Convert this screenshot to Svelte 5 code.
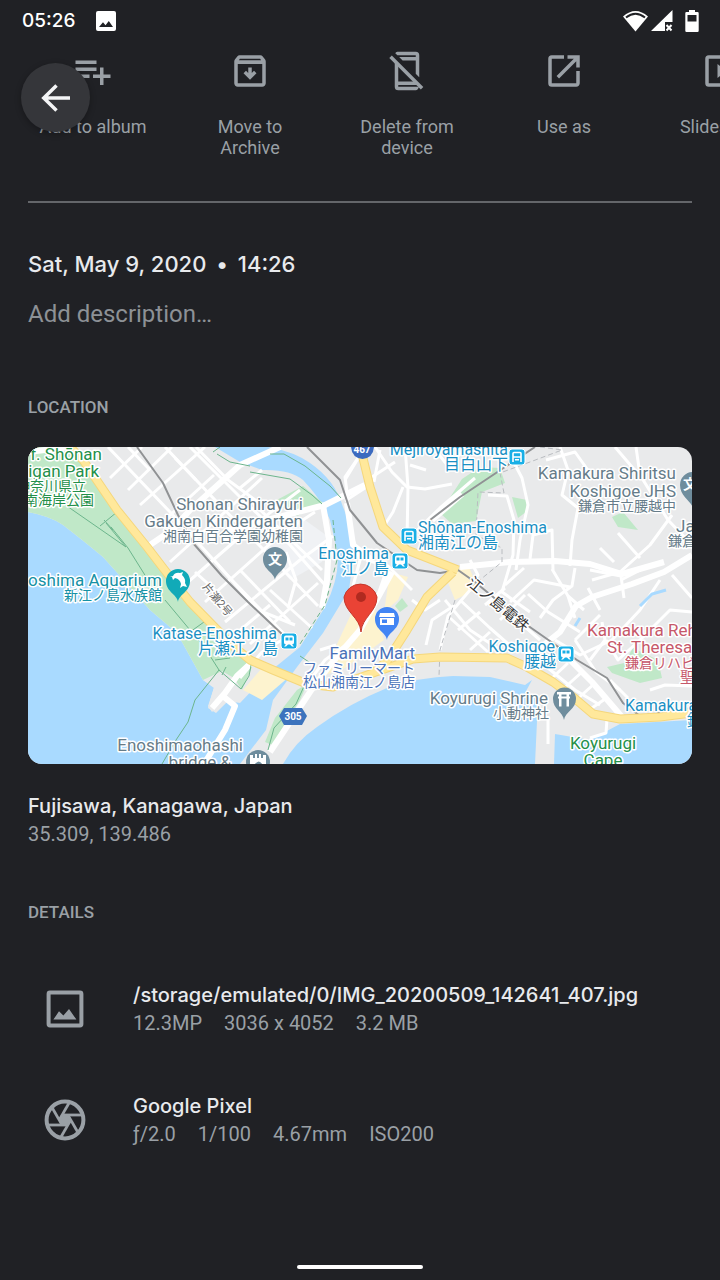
<script>
  const files = ['12.3MP', '3036 x 4052', '3.2 MB'];
  const camera = ['ƒ/2.0', '1/100', '4.67mm', 'ISO200'];

  // Narrow residential streets, drawn as thin white lines
  const lanes = [
    'M108 447 L170 512 L230 578 L290 640', 'M165 447 L215 500 L262 548 L318 606', 'M190 447 L240 497 L290 545 L325 585',
    'M128 490 L172 447', 'M110 478 L142 447', 'M140 505 L205 447', 'M156 528 L214 475', 'M170 562 L236 502 L262 478',
    'M188 582 L250 528 L300 490', 'M205 602 L280 535 L315 512', 'M225 622 L300 560 L333 536', 'M250 644 L318 583', 'M238 632 L270 605',
    'M150 470 L128 447', 'M196 480 L175 458', 'M214 560 L258 610 L295 625', 'M196 447 L228 480 L262 505', 'M250 500 L322 570',
    'M240 570 L290 622', 'M262 470 L240 488', 'M215 590 L195 572', 'M270 590 L312 628', 'M288 608 L296 580 L286 552',
    'M365 447 L345 480', 'M360 455 L345 477 L348 500', 'M375 447 L392 472 L407 487 L425 489 L452 484', 'M405 447 L408 487 L407 540',
    'M345 501 L368 486', 'M380 450 L374 482', 'M403 487 L393 512 L384 526', 'M407 540 L440 508 L475 478', 'M350 530 L360 560 L352 590',
    'M395 462 L372 477', 'M433 447 L448 466 L462 452', 'M410 465 L426 470', 'M366 560 L388 566 L412 590', 'M388 566 L372 612 L345 650',
    'M512 459 L522 478 L528 505 L520 540 L516 570', 'M488 495 L507 496 L514 520 L513 555 L502 592 L530 612', 'M530 559 L533 535 L552 530 L553 570',
    'M560 447 L568 470 L562 495 L578 508 L572 540 L570 566', 'M546 460 L575 452 L590 473', 'M615 447 L638 474', 'M636 447 L640 475 L668 520 L692 545',
    'M592 580 L620 572 L650 545 L672 515', 'M618 533 L640 558', 'M600 548 L614 562', 'M505 585 L524 568', 'M510 602 L534 580 L570 587',
    'M552 569 L568 596 L584 610', 'M540 618 L553 600 L572 586 L575 568', 'M528 594 L548 612 L580 632', 'M515 618 L540 640',
    'M485 605 L505 588', 'M500 620 L525 595', 'M460 600 L490 628 L515 650', 'M450 618 L488 652', 'M470 590 L448 616 L440 650',
    'M445 600 L470 630 L500 650', 'M458 630 L480 612', 'M470 650 L490 632', 'M426 645 L432 620 L455 605', 'M412 600 L425 610 L440 600',
    'M590 570 L621 576 L624 598', 'M621 580 L648 566', 'M600 610 L588 588', 'M575 618 L568 596', 'M555 640 L580 655 L612 640 L640 610 L660 580',
    'M606 640 L618 660 L640 640', 'M640 640 L670 610 L692 612', 'M672 575 L692 598', 'M575 640 L600 615', 'M590 660 L605 640 L602 622',
    'M650 690 L665 685 L692 686', 'M575 640 L596 672 L620 690', 'M540 670 L554 655', 'M550 680 L568 663', 'M562 690 L582 672',
    'M574 702 L594 684', 'M586 712 L608 697', 'M548 668 L575 690 L600 705', 'M607 719 L606 733 L590 738', 'M610 680 L628 698',
    'M308 683 L325 660 L350 642', 'M320 650 L336 645', 'M240 678 L262 652 L282 640', 'M470 560 L478 575 L468 588', 'M548 716 L548 744'
  ];

  // Wider through roads
  const roads = [
    'M28 452 L70 447', 'M147 547 L172 530 L190 510 L240 465 L280 447', 'M228 530 L325 505 L365 485', 'M323 505 L329 540 L327 580 L322 608',
    'M347 503 L353 545 L372 560', 'M432 520 L462 494', 'M460 567 L510 562 L555 561 L590 564 L622 574 L664 562',
    'M392 572 L360 630 L330 665 L310 692 L270 752', 'M535 652 L560 632 L576 606 L592 597 L632 584 L664 572 L692 555',
    'M560 650 L592 682 L622 717', 'M250 664 L237 676 L225 693 L212 708', 'M224 697 L235 706 L225 730 L204 764'
  ];

  const sea = [
    'M28 512 Q50 516 63 525 Q85 542 103 557 Q130 587 150 610 L177 633 L203 680 L214 687 L208 708 L216 713 L228 701 L240 703 L260 682 L273 669 L300 647 L325 607 Q341 575 337 550 L330 520 Q322 500 303 480 Q290 469 262 470 L240 462 L215 447 L268 447 Q295 452 310 463 Q335 480 343 507 Q353 530 354 552 L349 590 L323 633 L297 667 L273 700 L266 730 L240 764 L28 764 Z',
    'M283 764 Q295 742 317 727 Q350 703 387 688 Q420 677 453 676 L490 677 L525 685 L532 680 L525 693 L538 700 L535 764 Z',
    'M554 764 L555 734 L590 740 L603 733 L620 724 L692 720 L692 764 Z'
  ];

  const greens = [
    'M28 447 L72 447 L100 487 L145 550 L188 603 L235 650 L252 667 L242 690 L232 677 L203 680 L177 633 L150 610 Q130 587 103 557 Q85 542 63 525 Q50 516 28 512 Z',
    'M273 502 L303 486 L323 503 L297 516 Z',
    'M440 513 L462 479 L480 467 L500 468 L505 483 L482 492 L476 521 L452 524 Z',
    'M512 497 L527 500 L526 512 L518 518 Z',
    'M612 517 L623 512 L638 530 L618 527 Z',
    'M607 667 L624 663 L633 648 L658 660 L662 678 L640 683 L612 673 Z',
    'M297 690 L307 684 L300 700 L272 745 L265 742 L275 718 Z',
    'M395 606 L402 598 L408 606 L400 612 Z'
  ];

  const rails = [
    'M137 447 L163 483 L178 515 L193 543 L222 576 L248 602 L284 636',
    'M307 447 L340 480 L350 510 L377 543 L417 570 L440 573 L458 570 L475 582 L527 625 L577 660 L607 678 L623 703 L640 716 L660 713 L692 708',
    'M535 447 L460 497 L430 520'
  ];

  const yellow = [
    'M70 447 L83 460 L117 510 L147 547 L170 577 L190 602 L233 646 L250 660 L273 670 L307 684 L333 687 L373 673 L413 659 L440 657 L507 658 L527 667 L553 682 L573 697 L593 714 L620 719 L660 717 L692 713',
    'M362 454 L370 487 L383 527 L407 550 L458 570',
    'M453 572 L427 597 L407 630 L387 661 L374 672'
  ];
</script>

<div class="screen">
  <header class="status">
    <span class="time">05:26</span>
    <svg class="pic" viewBox="0 0 20 20" aria-hidden="true"><path fill-rule="evenodd" d="M2 0h16a2 2 0 0 1 2 2v16a2 2 0 0 1-2 2H2a2 2 0 0 1-2-2V2a2 2 0 0 1 2-2zM3 16h14l-4.200-6-3.300 4.300-2.500-3z" /></svg>
    <svg class="radio" viewBox="0 0 78 24" aria-hidden="true">
      <path d="M1 7.500Q13.500-3.500 26 7.500L13.500 22.500z" />
      <path class="cut" d="M4 8.500Q13.500 1 23 8.500" />
      <path d="M50.500 1v12H43v9H29z" />
      <path class="cross" d="M44.500 16l5 5.500m0-5.500l-5 5.500" />
      <path fill-rule="evenodd" d="M67 1h6v2h2.500a1.200 1.200 0 0 1 1.200 1.200v17.600a1.200 1.200 0 0 1-1.200 1.200h-11a1.200 1.200 0 0 1-1.200-1.200V4.200A1.200 1.200 0 0 1 64.500 3H67zM65.500 6v6.500h9V6z" />
    </svg>
  </header>

  <button class="back" aria-label="Back">
    <svg viewBox="0 0 24 24" aria-hidden="true"><path d="M20 12H5.500M12.300 4.800L5 12l7.300 7.200" /></svg>
  </button>

  <nav class="actions">
    <button>
      <svg viewBox="0 0 24 24" aria-hidden="true"><path d="M14 10H2v2h12zm0-4H2v2h12zm4 8v-4h-2v4h-4v2h4v4h2v-4h4v-2zM2 16h8v-2H2z" /></svg>
      <span>Add to album</span>
    </button>
    <button>
      <svg viewBox="0 0 24 24" aria-hidden="true"><path fill-rule="evenodd" d="M20.540 5.230l-1.390-1.680C18.880 3.210 18.470 3 18 3H6c-.47 0-.88.21-1.160.55L3.460 5.230C3.170 5.570 3 6.020 3 6.500V19c0 1.100.9 2 2 2h14c1.100 0 2-.9 2-2V6.500c0-.48-.17-.93-.46-1.270zM6.240 5h11.520l.6.800H5.620zM5 8h14v11H5zM11 10v3.200l-1.300-1.300-1.400 1.400L12 17l3.700-3.700-1.400-1.400-1.300 1.300V10z" /></svg>
      <span>Move to Archive</span>
    </button>
    <button>
      <svg viewBox="0 0 24 24" aria-hidden="true"><path d="M7 1h10a2 2 0 0 1 2 2v12.500l-2-2V6H9.500l-2-2H17V3H6.500L5.300 1.800C5.700 1.300 6.300 1 7 1zM5 6.800l2 2V18h9.200l2 2H7v1h11.800c-.2 1.100-.9 2-1.800 2H7a2 2 0 0 1-2-2z" /><path class="line" d="M2.600 3.800l18 18" /></svg>
      <span>Delete from device</span>
    </button>
    <button>
      <svg viewBox="0 0 24 24" aria-hidden="true"><path d="M19 19H5V5h7V3H5a2 2 0 0 0-2 2v14a2 2 0 0 0 2 2h14c1.100 0 2-.9 2-2v-7h-2zM14 3v2h3.590l-9.830 9.830 1.410 1.410L19 6.410V10h2V3z" /></svg>
      <span>Use as</span>
    </button>
    <button>
      <svg viewBox="0 0 24 24" aria-hidden="true"><path fill-rule="evenodd" d="M5 3h14a2 2 0 0 1 2 2v14a2 2 0 0 1-2 2H5a2 2 0 0 1-2-2V5a2 2 0 0 1 2-2zm0 2v14h14V5zm5 3l5 4-5 4z" /></svg>
      <span>Slideshow</span>
    </button>
  </nav>

  <main>
    <hr />
    <h1>Sat, May 9, 2020 <span class="dot">•</span> 14:26</h1>
    <input type="text" placeholder="Add description…" aria-label="Description" />

    <section>
      <h2>Location</h2>
      <svg class="map" viewBox="28 447 664 317" role="img" aria-label="Map of Fujisawa">
        <rect x="28" y="447" width="664" height="317" fill="#e9eaeb" />
        {#each sea as d}<path {d} fill="#a9daff" />{/each}
        {#each greens as d}<path {d} fill="#c0e8c8" />{/each}
        <path d="M203 680L222 671 234 678 245 695 234 704 226 698 212 712 208 706 214 688z" fill="#e9eaeb" />
        <path d="M352 612L372 600 384 640 345 668 322 676zM390 572L408 577 398 600 384 612zM445 575L468 565 478 588 455 600zM243 690L262 668 290 676 262 700z" fill="#fdf3cf" />
        <path d="M262 548L305 520 326 535 322 562 290 580z" fill="#f0f2f5" />
        <g class="lanes">{#each lanes as d}<path {d} />{/each}</g>
        <g class="roads">{#each roads as d}<path {d} />{/each}</g>
        <g class="trail">
          <path d="M64 504L126 547 106 523M100 526L117 512M104 520L113 530M111 527L128 548 148 580M165 600L205 648 219 670 241 689 249 676 252 660M219 670L195 700 188 722 176 740 162 764M190 632L204 622M215 660L230 658M222 675L226 667" />
          <path d="M213 452L220 447M217 454L230 462 250 466M270 454L284 454 305 466 330 486 341 498M250 472L290 479 312 495 322 504M305 684L296 704 274 728 268 750M300 656L312 664" />
          <path d="M333 520L337 560 325 605 300 644" stroke-dasharray="5 3" />
        </g>
        <path d="M640 606L652 594 666 590M575 626L580 618" fill="none" stroke="#a9daff" stroke-width="3" />
        <path d="M540 447L562 450 530 462 500 473 504 493 478 492 476 535 502 548 502 562 470 588M455 600L440 650 439 676" fill="none" stroke="#b9bcc0" stroke-dasharray="5 3" />
        <g class="rails">{#each rails as d}<path {d} />{/each}</g>
        <g class="edge">{#each yellow as d}<path {d} />{/each}</g>
        <g class="main-road">{#each yellow as d}<path {d} />{/each}</g>

        <path d="M351 447h23q-1 11-11.500 12Q352 458 351 447z" fill="#3c6bbf" />
        <text class="shield" x="362" y="453">467</text>
        <path d="M284 708h18l5 8-5 9h-18l-5-9z" fill="#3c73bd" />
        <text class="shield" x="293" y="720">305</text>

        {#each [[517, 457], [409, 536], [400, 561], [289, 641], [566, 654]] as [x, y], i}
          <g transform="translate({x} {y})">
            <rect x="-8" y="-8" width="16" height="16" rx="3" fill="#19afe6" stroke="#fff" />
            {#if i < 2}
              <path d="M-4 5v-8.500q0-1 1-1h6q1 0 1 1V5M-4 0h8M-2 2.800h4" fill="none" stroke="#fff" stroke-width="1.600" />
            {:else}
              <path fill-rule="evenodd" d="M-3-5.500h6a2 2 0 0 1 2 2v5a2 2 0 0 1-2 2l2 2H3l-2-2h-2l-2 2h-2l2-2a2 2 0 0 1-2-2v-5a2 2 0 0 1 2-2zm-.5 2v3h3v-3zm4 0v3h3v-3z" fill="#fff" />
            {/if}
          </g>
        {/each}

        <g fill="#fff">
          <path d="M275 580c-1-8-12-10-12-21a12 12 0 0 1 24 0c0 11-11 13-12 21z" fill="#6f8d9d" />
          <path d="M564 720c-1-8-11-11-11-21a11 11 0 0 1 23 0c0 10-11 13-12 21z" fill="#6f8d9d" />
          <path d="M693 509c-1-8-13-12-13-24a13 13 0 0 1 26 0c0 12-12 16-13 24z" fill="#6f8d9d" />
          <path d="M178 602c-1-8-12-10-12-21a12 12 0 0 1 24 0c0 11-11 13-12 21z" fill="#11aab8" />
          <path d="M387 640c-1-8-12-10-12-21a12 12 0 0 1 24 0c0 11-11 13-12 21z" fill="#4285f4" />
          <circle cx="258" cy="762" r="12" fill="#6f8d9d" />
          <path d="M250 755h3v3h2v-4h2v4h2v-4h2v4h2v-3h3v9h-4q-3-5-7 0h-5z" />
          <path d="M170 577l3-1q2-4 7-3l3-1-1 3q4 4 3 8l2 4-4-1-3 2 1-4q-1-5-6-6l-2 2-1-3z" />
          <path fill-rule="evenodd" d="M380 613h14l1 4h-16zm0 5h14v7h-14zm2 1.500v3.500h5v-3.500z" />
          <path d="M557 692h14v2.500h-2v2h1v2h-1v8h-2.500v-8h-5v8H559v-8h-1v-2h1v-2h-2zm4.500 2.500v2h5v-2z" fill-rule="evenodd" />
        </g>
        <text class="sign" x="275" y="564">文</text>
        <text class="sign" x="690" y="489">文</text>
        <path d="M361 632c-1-15-17-20-17-35a17 17 0 0 1 33 0c0 15-15 20-16 35z" fill="#ea4335" stroke="#c5382c" />
        <circle cx="361" cy="597" r="5" fill="#b02a20" />

        <g class="park">
          <text class="end" x="102" y="460">f. Shōnan</text>
          <text class="end" x="99" y="477">igan Park</text>
          <text class="end jp" x="86" y="491">神奈川県立</text>
          <text class="end jp" x="94" y="505">南海岸公園</text>
          <text class="mid" x="603" y="749">Koyurugi</text>
          <text class="mid" x="603" y="766">Cape</text>
        </g>
        <g class="place">
          <text class="end" x="303" y="510">Shonan Shirayuri</text>
          <text class="end" x="303" y="527">Gakuen Kindergarten</text>
          <text class="end jp" x="303" y="541">湘南白百合学園幼稚園</text>
          <text class="end" x="676" y="479">Kamakura Shiritsu</text>
          <text class="end" x="676" y="497">Koshigoe JHS</text>
          <text class="end jp" x="676" y="511">鎌倉市立腰越中</text>
          <text x="676" y="532">Ja</text>
          <text class="jp" x="668" y="546">鎌倉</text>
          <text class="end" x="548" y="704">Koyurugi Shrine</text>
          <text class="end jp" x="549" y="718">小動神社</text>
          <text class="end" x="243" y="751">Enoshimaohashi</text>
          <text class="end" x="231" y="768">bridge &amp;</text>
        </g>
        <g class="sight">
          <text class="end" x="162" y="586">oshima Aquarium</text>
          <text class="end jp" x="162" y="600">新江ノ島水族館</text>
        </g>
        <g class="station">
          <text class="end" x="508" y="455">Mejiroyamashita</text>
          <text class="end" x="508" y="470">目白山下</text>
          <text x="418" y="533">Shōnan-Enoshima</text>
          <text x="418" y="548">湘南江の島</text>
          <text class="end" x="389" y="559">Enoshima</text>
          <text class="end" x="389" y="574">江ノ島</text>
          <text class="end" x="277" y="639">Katase-Enoshima</text>
          <text class="end" x="278" y="654">片瀬江ノ島</text>
          <text class="end" x="555" y="652">Koshigoe</text>
          <text class="end" x="556" y="667">腰越</text>
          <text x="625" y="711">Kamakura</text>
          <text x="687" y="726">鎌</text>
        </g>
        <g class="shop">
          <text class="end" x="415" y="659">FamilyMart</text>
          <text class="end jp" x="415" y="673">ファミリーマート</text>
          <text class="end jp" x="415" y="687">松山湘南江ノ島店</text>
        </g>
        <g class="hospital">
          <text x="587" y="636">Kamakura Reh</text>
          <text x="607" y="653">St. Theresa</text>
          <text class="jp" x="625" y="668">鎌倉リハビリ</text>
          <text class="jp" x="680" y="682">聖</text>
        </g>
        <text class="street" transform="translate(202 587) rotate(50)">片瀬2号</text>
        <text class="railway" transform="translate(466 584) rotate(40)">江ノ島電鉄</text>
      </svg>
      <p class="title">Fujisawa, Kanagawa, Japan</p>
      <p class="meta">35.309, 139.486</p>
    </section>

    <section class="details">
      <h2>Details</h2>
      <div class="row">
        <svg viewBox="0 0 24 24" aria-hidden="true"><path fill-rule="evenodd" d="M4.500 2.800h15A1.700 1.700 0 0 1 21.200 4.500v15a1.700 1.700 0 0 1-1.700 1.700h-15A1.700 1.700 0 0 1 2.800 19.500v-15A1.700 1.700 0 0 1 4.500 2.800zM4.800 4.800v14.400h14.400V4.800zM6.200 17.300l2.800-4.200 2.200 2.200 2.800-3.300 3.700 5.300z" /></svg>
        <div>
          <p class="title">/storage/emulated/0/IMG_20200509_142641_407.jpg</p>
          <p class="meta">{#each files as f}<span>{f}</span>{/each}</p>
        </div>
      </div>
      <div class="row">
        <svg viewBox="0 0 24 24" aria-hidden="true">
          <circle class="ring" cx="12" cy="12" r="9.200" />
          <circle cx="12" cy="12" r="3" />
          <g class="blades">{#each [0, 60, 120, 180, 240, 300] as a}<path d="M10.500 9.500H20.500" transform="rotate({a} 12 12)" />{/each}</g>
        </svg>
        <div>
          <p class="title">Google Pixel</p>
          <p class="meta">{#each camera as c}<span>{c}</span>{/each}</p>
        </div>
      </div>
    </section>
  </main>

  <footer><span></span></footer>
</div>

<style>
  :global(body) { margin: 0; background: #202125; }
  .screen {
    position: relative;
    display: flex;
    flex-direction: column;
    min-height: 100vh;
    overflow: hidden;
    background: #202125;
    color: #e8eaed;
    font-family: Roboto, "Noto Sans CJK JP", sans-serif;
  }
  .status { display: flex; align-items: center; height: 42px; padding: 0 20px 0 22px; }
  .time { color: #fff; font: 500 19px/28px Inter, sans-serif; }
  .pic { width: 20px; height: 20px; margin-left: 21px; fill: #fff; }
  .radio { width: 78px; height: 24px; margin-left: auto; fill: #fff; }
  .cut { fill: none; stroke: #202125; stroke-width: 2; }
  .cross { fill: none; stroke: #fff; stroke-width: 2; }

  button { border: 0; padding: 0; background: none; color: inherit; font: inherit; cursor: pointer; }
  .back {
    position: absolute;
    top: 63px;
    left: 21px;
    display: grid;
    place-items: center;
    width: 69px;
    height: 69px;
    border-radius: 50%;
    background: #35363a;
    box-shadow: 0 2px 6px rgba(0, 0, 0, 0.3);
  }
  .back svg { width: 42px; height: 42px; fill: none; stroke: #f4f5f6; stroke-width: 2; }

  .actions { display: flex; gap: 1px; padding: 8px 0 0 15px; }
  .actions button {
    flex: 0 0 156px;
    display: flex;
    flex-direction: column;
    align-items: center;
    gap: 24px;
    color: #9aa0a6;
    font-size: 18px;
    line-height: 21px;
  }
  .actions svg { width: 42px; height: 42px; fill: #9aa0a6; }
  .actions span { max-width: 110px; }
  .line { stroke: #9aa0a6; stroke-width: 2; }

  main { padding: 0 28px; }
  hr { height: 2px; margin: 43px 0 0; border: 0; background: #64666a; }
  h1 { margin: 47px 0 22px; font: 500 22px/28px Inter, sans-serif; }
  .dot { margin: 0 4px; }
  input {
    display: block;
    box-sizing: border-box;
    width: 100%;
    height: 28px;
    padding: 0;
    border: 0;
    outline: 0;
    background: none;
    color: #e8eaed;
    font: 24px/28px Roboto, sans-serif;
  }
  input::placeholder { color: #8d9196; opacity: 1; }
  h2 { margin: 69px 0 30px; color: #9aa0a6; font-size: 17px; font-weight: 500; line-height: 20px; text-transform: uppercase; }
  p { margin: 0; line-height: 28px; }
  .title { font-family: Inter, sans-serif; font-size: 20px; font-weight: 500; overflow-wrap: anywhere; }
  .meta { display: flex; flex-wrap: wrap; column-gap: 22px; color: #9aa0a6; font-size: 20px; }

  .map { display: block; width: 100%; height: auto; margin-bottom: 28px; border-radius: 14px; }
  .lanes, .roads, .trail, .rails, .edge, .main-road { fill: none; stroke-linejoin: round; }
  .lanes { stroke: #fff; stroke-width: 3; }
  .roads { stroke: #fff; stroke-width: 6; }
  .trail { stroke: #6cb58c; stroke-width: 1; }
  .rails { stroke: #909294; stroke-width: 2; }
  .edge { stroke: #f5d77c; stroke-width: 9; }
  .main-road { stroke: #ffe89b; stroke-width: 7; }
  text { font-size: 17px; paint-order: stroke; stroke: #fff; stroke-width: 3px; stroke-linejoin: round; }
  .station text { font-size: 16px; }
  .jp { font-size: 14px; }
  .end { text-anchor: end; }
  .mid { text-anchor: middle; }
  .park { fill: #24904a; }
  .place { fill: #667c89; }
  .sight { fill: #1591a5; }
  .station { fill: #1b90c4; }
  .shop { fill: #4a72b8; }
  .hospital { fill: #c6586a; }
  .shield, .sign { fill: #fff; stroke: none; text-anchor: middle; font-weight: 700; }
  .shield { font-size: 10px; }
  .sign { font-size: 14px; }
  .street { fill: #666; font-size: 11px; }
  .railway { fill: #333; font-size: 15px; }

  .details h2 { margin: 54px 0 59px; }
  .row { display: flex; align-items: center; gap: 44px; margin-bottom: 55px; padding-left: 13px; }
  .row > svg { flex: none; width: 48px; height: 48px; fill: #9aa0a6; }
  .ring { fill: none; stroke: #9aa0a6; stroke-width: 2; }
  .blades { fill: none; stroke: #9aa0a6; stroke-width: 1.4; }

  footer { display: flex; justify-content: center; margin-top: auto; padding-bottom: 11px; }
  footer span { width: 126px; height: 4px; border-radius: 2px; background: #fff; }
</style>
